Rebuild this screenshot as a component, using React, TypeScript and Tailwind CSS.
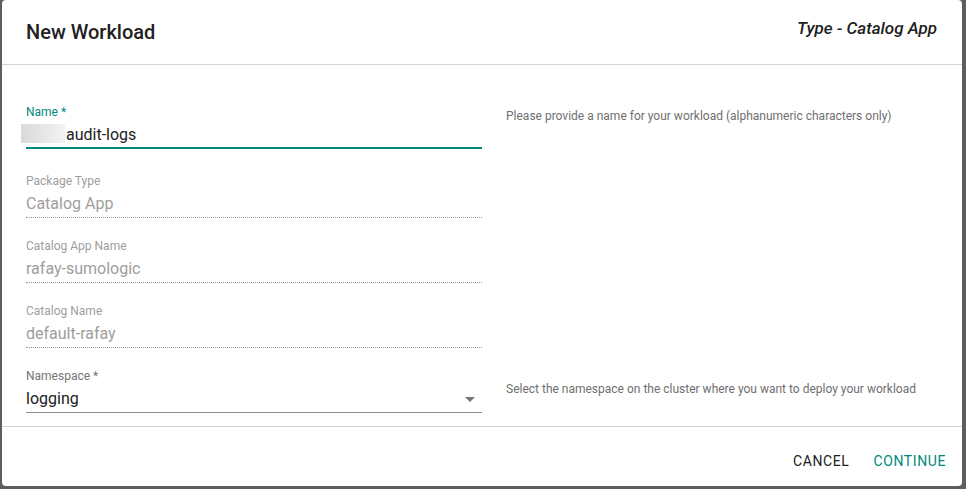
import React from "react";

const font = { fontFamily: "Roboto, 'Noto Sans', Arial, sans-serif" };

function DisabledField({ label, value, className }: { label: string; value: string; className?: string }) {
  return (
    <div className={"w-[456px] border-b border-dotted border-[#949494] pb-[4px] " + (className ?? "")}>
      <div className="text-[12px] leading-[14px] text-[#9e9e9e]">{label}</div>
      <div className="mt-[6px] text-[16px] leading-[19px] text-[#9e9e9e]">{value}</div>
    </div>
  );
}

export default function App() {
  return (
    <div className="w-[966px] h-[489px] bg-[#5e5e5e] pl-[2px] pr-[4px] pb-[3px] flex" style={font}>
      <div className="w-[960px] h-[486px] bg-white rounded-[4px] flex flex-col overflow-hidden">
        {/* Header */}
        <div className="h-[65px] shrink-0 flex justify-between items-start px-[24px] pt-[16px] border-b border-[#d4d4d4]">
          <div className="text-[20px] leading-[32px] font-medium text-[#212121]">New Workload</div>
          <div className="text-[17px] leading-[24px] italic font-medium text-[#212121] pr-[1px]">Type - Catalog App</div>
        </div>

        {/* Content */}
        <div className="h-[362px] shrink-0 border-b border-[#d4d4d4] px-[24px] pt-[40px]">
          {/* Name row */}
          <div className="grid grid-cols-[456px_1fr] gap-x-[24px]">
            <div className="border-b-2 border-[#00897b] pb-[3px]">
              <div className="text-[12px] leading-[14px] text-[#00897b]">Name *</div>
              <div className="mt-[6px] text-[16px] leading-[19px] text-[#212121] flex items-start">
                <span className="inline-block w-[44px] h-[19px] -ml-[5px] -mt-[1px] bg-gradient-to-r from-[#dadada] via-[#e6e6e6] to-[#f3f3f3]" />
                <span className="ml-[1px]">audit-logs</span>
              </div>
            </div>
            <div className="pt-[4px] text-[12px] leading-[14px] text-[#6f6f6f]">
              Please provide a name for your workload (alphanumeric characters only)
            </div>
          </div>

          <DisabledField className="mt-[25px]" label="Package Type" value="Catalog App" />
          <DisabledField className="mt-[21px]" label="Catalog App Name" value="rafay-sumologic" />
          <DisabledField className="mt-[21px]" label="Catalog Name" value="default-rafay" />

          {/* Namespace row */}
          <div className="mt-[21px] grid grid-cols-[456px_1fr] gap-x-[24px]">
            <div className="border-b border-[#8f8f8f] pb-[4px]">
              <div className="text-[12px] leading-[14px] text-[#757575]">Namespace *</div>
              <div className="mt-[6px] h-[19px] text-[16px] leading-[19px] text-[#212121] flex justify-between">
                <span>logging</span>
                <svg viewBox="0 0 24 24" className="w-[24px] h-[24px] -mt-[2px] -mb-[3px] shrink-0" fill="#757575">
                  <path d="M7 10l5 5 5-5z" />
                </svg>
              </div>
            </div>
            <div className="pt-[13px] text-[12px] leading-[14px] text-[#6f6f6f]">
              Select the namespace on the cluster where you want to deploy your workload
            </div>
          </div>
        </div>

        {/* Footer */}
        <div className="flex-1 flex justify-end items-start pt-[24px] pr-[8px] gap-[8px]">
          <button className="px-[8px] text-[14px] leading-[20px] font-normal tracking-[0.6px] text-[#212121]">CANCEL</button>
          <button className="px-[8px] text-[14px] leading-[20px] font-normal tracking-[0.6px] text-[#00897b]">CONTINUE</button>
        </div>
      </div>
    </div>
  );
}
